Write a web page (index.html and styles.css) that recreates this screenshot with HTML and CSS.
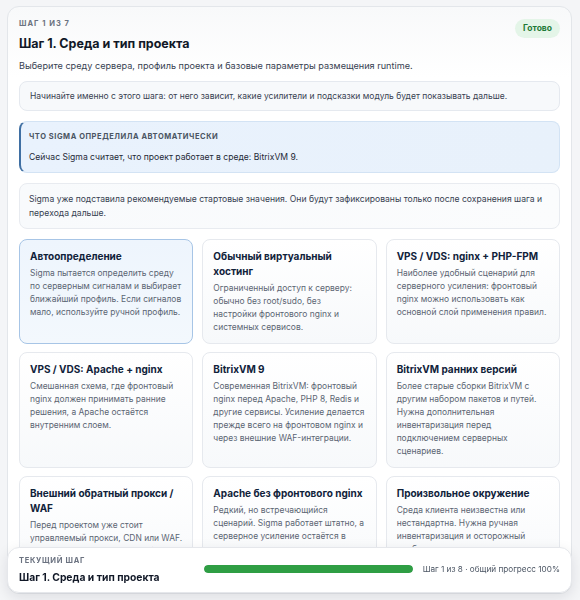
FILE: index.html
```html
<!DOCTYPE html>
<html lang="ru">
<head>
<meta charset="utf-8">
<title>Шаг 1. Среда и тип проекта</title>
<link rel="stylesheet" href="styles.css">
</head>
<body>
<main class="panel">
  <header class="head">
    <div class="head-text">
      <div class="eyebrow">Шаг 1 из 7</div>
      <h1 class="title">Шаг 1. Среда и тип проекта</h1>
    </div>
    <span class="badge">Готово</span>
  </header>
  <p class="lead">Выберите среду сервера, профиль проекта и базовые параметры размещения runtime.</p>
  <div class="note">Начинайте именно с этого шага: от него зависит, какие усилители и подсказки модуль будет показывать дальше.</div>
  <section class="auto">
    <div class="auto-label">Что Sigma определила автоматически</div>
    <div class="auto-text">Сейчас Sigma считает, что проект работает в среде: BitrixVM 9.</div>
  </section>
  <div class="hint">Sigma уже подставила рекомендуемые стартовые значения. Они будут зафиксированы только после сохранения шага и перехода дальше.</div>
  <div class="grid">
    <div class="opt opt-active">
      <div class="opt-title">Автоопределение</div>
      <div class="opt-desc">Sigma пытается определить среду по серверным сигналам и выбирает ближайший профиль. Если сигналов мало, используйте ручной профиль.</div>
    </div>
    <div class="opt">
      <div class="opt-title">Обычный виртуальный хостинг</div>
      <div class="opt-desc">Ограниченный доступ к серверу: обычно без root/sudo, без настройки фронтового nginx и системных сервисов.</div>
    </div>
    <div class="opt">
      <div class="opt-title">VPS / VDS: nginx + PHP-FPM</div>
      <div class="opt-desc">Наиболее удобный сценарий для серверного усиления: фронтовый nginx можно использовать как основной слой применения правил.</div>
    </div>
    <div class="opt">
      <div class="opt-title">VPS / VDS: Apache + nginx</div>
      <div class="opt-desc">Смешанная схема, где фронтовый nginx должен принимать ранние решения, а Apache остаётся внутренним слоем.</div>
    </div>
    <div class="opt">
      <div class="opt-title">BitrixVM 9</div>
      <div class="opt-desc">Современная BitrixVM: фронтовый nginx перед Apache, PHP 8, Redis и другие сервисы. Усиление делается прежде всего на фронтовом nginx и через внешние WAF-интеграции.</div>
    </div>
    <div class="opt">
      <div class="opt-title">BitrixVM ранних версий</div>
      <div class="opt-desc">Более старые сборки BitrixVM с другим набором пакетов и путей. Нужна дополнительная инвентаризация перед подключением серверных сценариев.</div>
    </div>
    <div class="opt">
      <div class="opt-title">Внешний обратный прокси / WAF</div>
      <div class="opt-desc">Перед проектом уже стоит управляемый прокси, CDN или WAF. Sigma учитывает это и не дублирует правила.</div>
    </div>
    <div class="opt">
      <div class="opt-title">Apache без фронтового nginx</div>
      <div class="opt-desc">Редкий, но встречающийся сценарий. Sigma работает штатно, а серверное усиление остаётся в ограниченном режиме.</div>
    </div>
    <div class="opt">
      <div class="opt-title">Произвольное окружение</div>
      <div class="opt-desc">Среда клиента неизвестна или нестандартна. Нужна ручная инвентаризация и осторожный подбор правил.</div>
    </div>
  </div>
</main>
<footer class="current">
  <div class="current-info">
    <div class="eyebrow">Текущий шаг</div>
    <div class="current-title">Шаг 1. Среда и тип проекта</div>
  </div>
  <div class="track"><div class="fill" style="width:100%"></div></div>
  <div class="current-meta">Шаг 1 из 8 · общий прогресс 100%</div>
</footer>
</body>
</html>
```
FILE: styles.css
```css
* { box-sizing: border-box; }
html, body { margin: 0; }
body {
  background: #f4f5f7;
  font-family: Inter, "Noto Sans", "DejaVu Sans", sans-serif;
  color: #1f2937;
  padding: 6px 8px 80px 7px;
}
.panel {
  background: linear-gradient(#f8f9fa, #ffffff 70px);
  border: 1px solid #e3e6ea;
  border-radius: 12px;
  padding: 11px 11px 12px 11px;
}
.head {
  display: flex;
  justify-content: space-between;
  align-items: flex-start;
}
.eyebrow {
  font-size: 7.5px;
  font-weight: 700;
  letter-spacing: 1px;
  text-transform: uppercase;
  color: #6b7280;
  line-height: 10px;
}
.head .eyebrow { margin-top: 1px; }
.title {
  margin: 7px 0 0;
  font-size: 12.5px;
  font-weight: 700;
  line-height: 16px;
  color: #111827;
}
.badge {
  background: #e4f5e8;
  color: #1e7a36;
  font-size: 8.5px;
  font-weight: 700;
  border-radius: 10px;
  padding: 0 8px;
  height: 19px;
  line-height: 19px;
  margin-top: 1px;
}
.lead {
  margin: 7px 0 0;
  font-size: 9.15px;
  line-height: 14px;
  color: #374151;
}
.note {
  margin-top: 8px;
  border: 1px solid #e5e9ef;
  background: #f7f9fb;
  border-radius: 8px;
  padding: 8px 10px;
  font-size: 8.5px;
  line-height: 12px;
  color: #374151;
}
.auto {
  margin-top: 10px;
  border: 1px solid #d3e3f4;
  border-left: 2px solid #3f6fa3;
  background: linear-gradient(90deg, #e9f2fd, #e8f1fb);
  border-radius: 8px;
  padding: 10px 10px 8px 8px;
}
.auto-label {
  font-size: 7.5px;
  font-weight: 700;
  letter-spacing: 0.55px;
  text-transform: uppercase;
  color: #4b5563;
  line-height: 10px;
}
.auto-text {
  margin-top: 8px;
  font-size: 8.6px;
  line-height: 14px;
  color: #1f2937;
}
.hint {
  margin-top: 10px;
  border: 1px solid #e8ebf0;
  background: linear-gradient(90deg, #f8fafc, #fbfcfd);
  border-radius: 8px;
  padding: 8px 9px;
  font-size: 8.6px;
  line-height: 14px;
  color: #374151;
}
.grid {
  margin-top: 10px;
  display: grid;
  grid-template-columns: repeat(3, 1fr);
  gap: 8px 9px;
}
.opt {
  border: 1px solid #e6e9ee;
  border-radius: 8px;
  background: linear-gradient(#ffffff, #f7f9fb);
  padding: 9px 10px 9px;
}
.opt-active {
  border-color: #a7c5e6;
  background: linear-gradient(#eef5fd, #f3f8fd);
}
.opt-title {
  font-size: 10px;
  font-weight: 700;
  line-height: 15px;
  color: #10223a;
}
.opt-desc {
  margin-top: 3px;
  font-size: 8.45px;
  line-height: 13px;
  color: #5b6573;
}
.current {
  position: fixed;
  left: 7px;
  right: 8px;
  bottom: 7px;
  height: 46px;
  background: #ffffff;
  border: 1px solid #e5e7eb;
  border-radius: 12px;
  box-shadow: 0 4px 14px rgba(15, 23, 42, 0.10);
  display: flex;
  align-items: center;
  gap: 10px;
  padding: 0 11px;
}
.current-info {
  width: 175px;
  flex-shrink: 0;
}
.current .eyebrow { letter-spacing: 0.7px; }
.current-title {
  margin-top: 5px;
  font-size: 10.3px;
  font-weight: 700;
  line-height: 13px;
  color: #111827;
}
.track {
  flex: 1;
  height: 8px;
  border-radius: 4px;
  background: #e5e7eb;
  overflow: hidden;
  margin-bottom: 2px;
}
.fill {
  height: 100%;
  background: #2f9e44;
  border-radius: 4px;
}
.current-meta {
  flex-shrink: 0;
  font-size: 8.2px;
  color: #4b5563;
  margin-bottom: 2px;
}
```
